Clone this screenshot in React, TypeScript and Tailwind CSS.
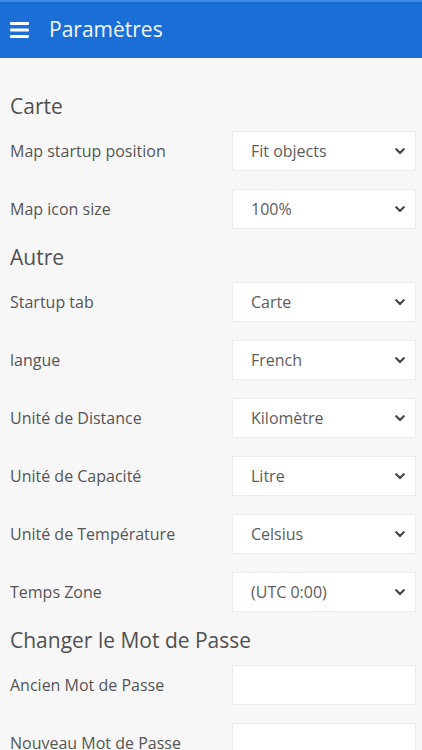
import React from "react";

const Chevron = () => (
  <svg width="10" height="7" viewBox="0 0 10 7" className="shrink-0">
    <path d="M1.3 1.3 L5 5 L8.7 1.3" fill="none" stroke="#4a4a4a" strokeWidth="2.3" strokeLinecap="round" strokeLinejoin="round" />
  </svg>
);

const SelectRow = ({ label, value, first }: { label: string; value: string; first?: boolean }) => (
  <div className={`flex items-center h-[40px] ${first ? "mt-[11px]" : "mt-[18px]"}`}>
    <div className="flex-1 pl-[10px] text-[16px] text-[#555]">{label}</div>
    <div className="w-[184px] h-[40px] mr-[6px] bg-white border border-[#ececec] flex items-center pl-[18px] pr-[10px]">
      <span className="flex-1 text-[16px] text-[#5c5c5c]">{value}</span>
      <Chevron />
    </div>
  </div>
);

const InputRow = ({ label, first }: { label: string; first?: boolean }) => (
  <div className={`flex items-center h-[40px] ${first ? "mt-[11px]" : "mt-[18px]"}`}>
    <div className="flex-1 pl-[10px] text-[16px] text-[#555]">{label}</div>
    <div className="w-[184px] h-[40px] mr-[6px] bg-white border border-[#ececec]" />
  </div>
);

const Heading = ({ children }: { children: React.ReactNode }) => (
  <div className="mt-[14px] pl-[10px] h-[28px] leading-[28px] text-[21px] text-[#505050]">{children}</div>
);

export default function App() {
  return (
    <div className="w-[422px] h-[750px] overflow-hidden bg-[#f7f7f7]" style={{ fontFamily: '"Open Sans", sans-serif' }}>
      <div className="h-[58px] bg-[#1a6ed6] border-t-2 border-[#3f8ce6] flex items-center">
        <svg width="19" height="16" viewBox="0 0 19 16" className="ml-[10px] mr-[20px]">
          <rect x="0" y="0" width="19" height="3" rx="1" fill="#fff" />
          <rect x="0" y="6.5" width="19" height="3" rx="1" fill="#fff" />
          <rect x="0" y="13" width="19" height="3" rx="1" fill="#fff" />
        </svg>
        <span className="text-[21px] text-[#f2f6fc]">Paramètres</span>
      </div>
      <div className="pt-[20px]">
        <Heading>Carte</Heading>
        <SelectRow first label="Map startup position" value="Fit objects" />
        <SelectRow label="Map icon size" value="100%" />
        <Heading>Autre</Heading>
        <SelectRow first label="Startup tab" value="Carte" />
        <SelectRow label="langue" value="French" />
        <SelectRow label="Unité de Distance" value="Kilomètre" />
        <SelectRow label="Unité de Capacité" value="Litre" />
        <SelectRow label="Unité de Température" value="Celsius" />
        <SelectRow label="Temps Zone" value="(UTC 0:00)" />
        <Heading>Changer le Mot de Passe</Heading>
        <InputRow first label="Ancien Mot de Passe" />
        <InputRow label="Nouveau Mot de Passe" />
      </div>
    </div>
  );
}
